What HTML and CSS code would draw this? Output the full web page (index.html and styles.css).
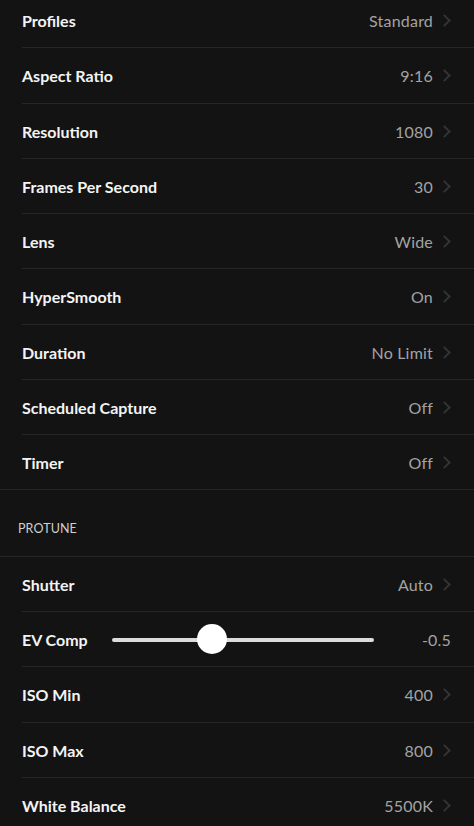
FILE: index.html
```html
<!DOCTYPE html>
<html>
<head>
<meta charset="utf-8">
<link rel="stylesheet" href="styles.css">
</head>
<body>
<div class="screen">
  <div class="group">
    <div class="row"><span class="label">Profiles</span><span class="value">Standard</span><span class="chev"></span></div>
    <div class="row"><span class="label">Aspect Ratio</span><span class="value">9:16</span><span class="chev"></span></div>
    <div class="row"><span class="label">Resolution</span><span class="value">1080</span><span class="chev"></span></div>
    <div class="row"><span class="label">Frames Per Second</span><span class="value">30</span><span class="chev"></span></div>
    <div class="row"><span class="label">Lens</span><span class="value">Wide</span><span class="chev"></span></div>
    <div class="row"><span class="label">HyperSmooth</span><span class="value">On</span><span class="chev"></span></div>
    <div class="row"><span class="label">Duration</span><span class="value">No Limit</span><span class="chev"></span></div>
    <div class="row"><span class="label">Scheduled Capture</span><span class="value">Off</span><span class="chev"></span></div>
    <div class="row row-last"><span class="label">Timer</span><span class="value">Off</span><span class="chev"></span></div>
  </div>
  <div class="section">PROTUNE</div>
  <div class="group">
    <div class="row"><span class="label">Shutter</span><span class="value">Auto</span><span class="chev"></span></div>
    <div class="row slider-row"><span class="label">EV Comp</span>
      <div class="slider"><div class="track"></div><div class="thumb"></div></div>
      <span class="value ev">-0.5</span></div>
    <div class="row"><span class="label">ISO Min</span><span class="value">400</span><span class="chev"></span></div>
    <div class="row"><span class="label">ISO Max</span><span class="value">800</span><span class="chev"></span></div>
    <div class="row"><span class="label">White Balance</span><span class="value">5500K</span><span class="chev"></span></div>
  </div>
</div>
</body>
</html>
```
FILE: styles.css
```css
html, body {
  margin: 0;
  padding: 0;
  background: #131313;
  overflow: hidden;
}
.screen {
  width: 474px;
  height: 826px;
  overflow: hidden;
  background: #131313;
  font-family: Lato, "Open Sans", sans-serif;
}
.group:first-child {
  margin-top: -7px;
}
.row {
  position: relative;
  box-sizing: border-box;
  height: 55.25px;
  display: flex;
  align-items: center;
  padding: 0 24px 0 22px;
}
.row::after {
  content: "";
  position: absolute;
  left: 22px;
  right: 0;
  bottom: 0;
  height: 1px;
  background: #262626;
}
.row-last::after {
  left: 0;
}
.label {
  color: #f4f4f4;
  font-weight: 700;
  font-size: 16px;
  flex: 1;
}
.value {
  color: #a3a3a3;
  font-size: 16px;
  letter-spacing: 0.2px;
}
.chev {
  width: 6px;
  height: 11px;
  margin-left: 11px;
  position: relative;
}
.chev::before {
  content: "";
  position: absolute;
  left: -4px;
  top: 1px;
  width: 7px;
  height: 7px;
  border-top: 2px solid #333;
  border-right: 2px solid #333;
  transform: rotate(45deg);
}
.section {
  box-sizing: border-box;
  height: 66.5px;
  display: flex;
  align-items: center;
  padding: 11px 0 0 18px;
  color: #cfcfcf;
  font-size: 12.5px;
  letter-spacing: 0.1px;
  border-bottom: 1px solid #262626;
}
.slider-row .label {
  flex: 0 0 auto;
  width: 90px;
}
.slider {
  position: relative;
  width: 262px;
  height: 30px;
  display: flex;
  align-items: center;
  flex: 0 0 auto;
}
.track {
  width: 100%;
  height: 4px;
  border-radius: 2px;
  background: #dcdcdc;
}
.thumb {
  position: absolute;
  left: 85px;
  top: -1px;
  width: 30px;
  height: 30px;
  border-radius: 50%;
  background: #fff;
}
.ev {
  margin-left: auto;
  margin-right: -1px;
}
```
